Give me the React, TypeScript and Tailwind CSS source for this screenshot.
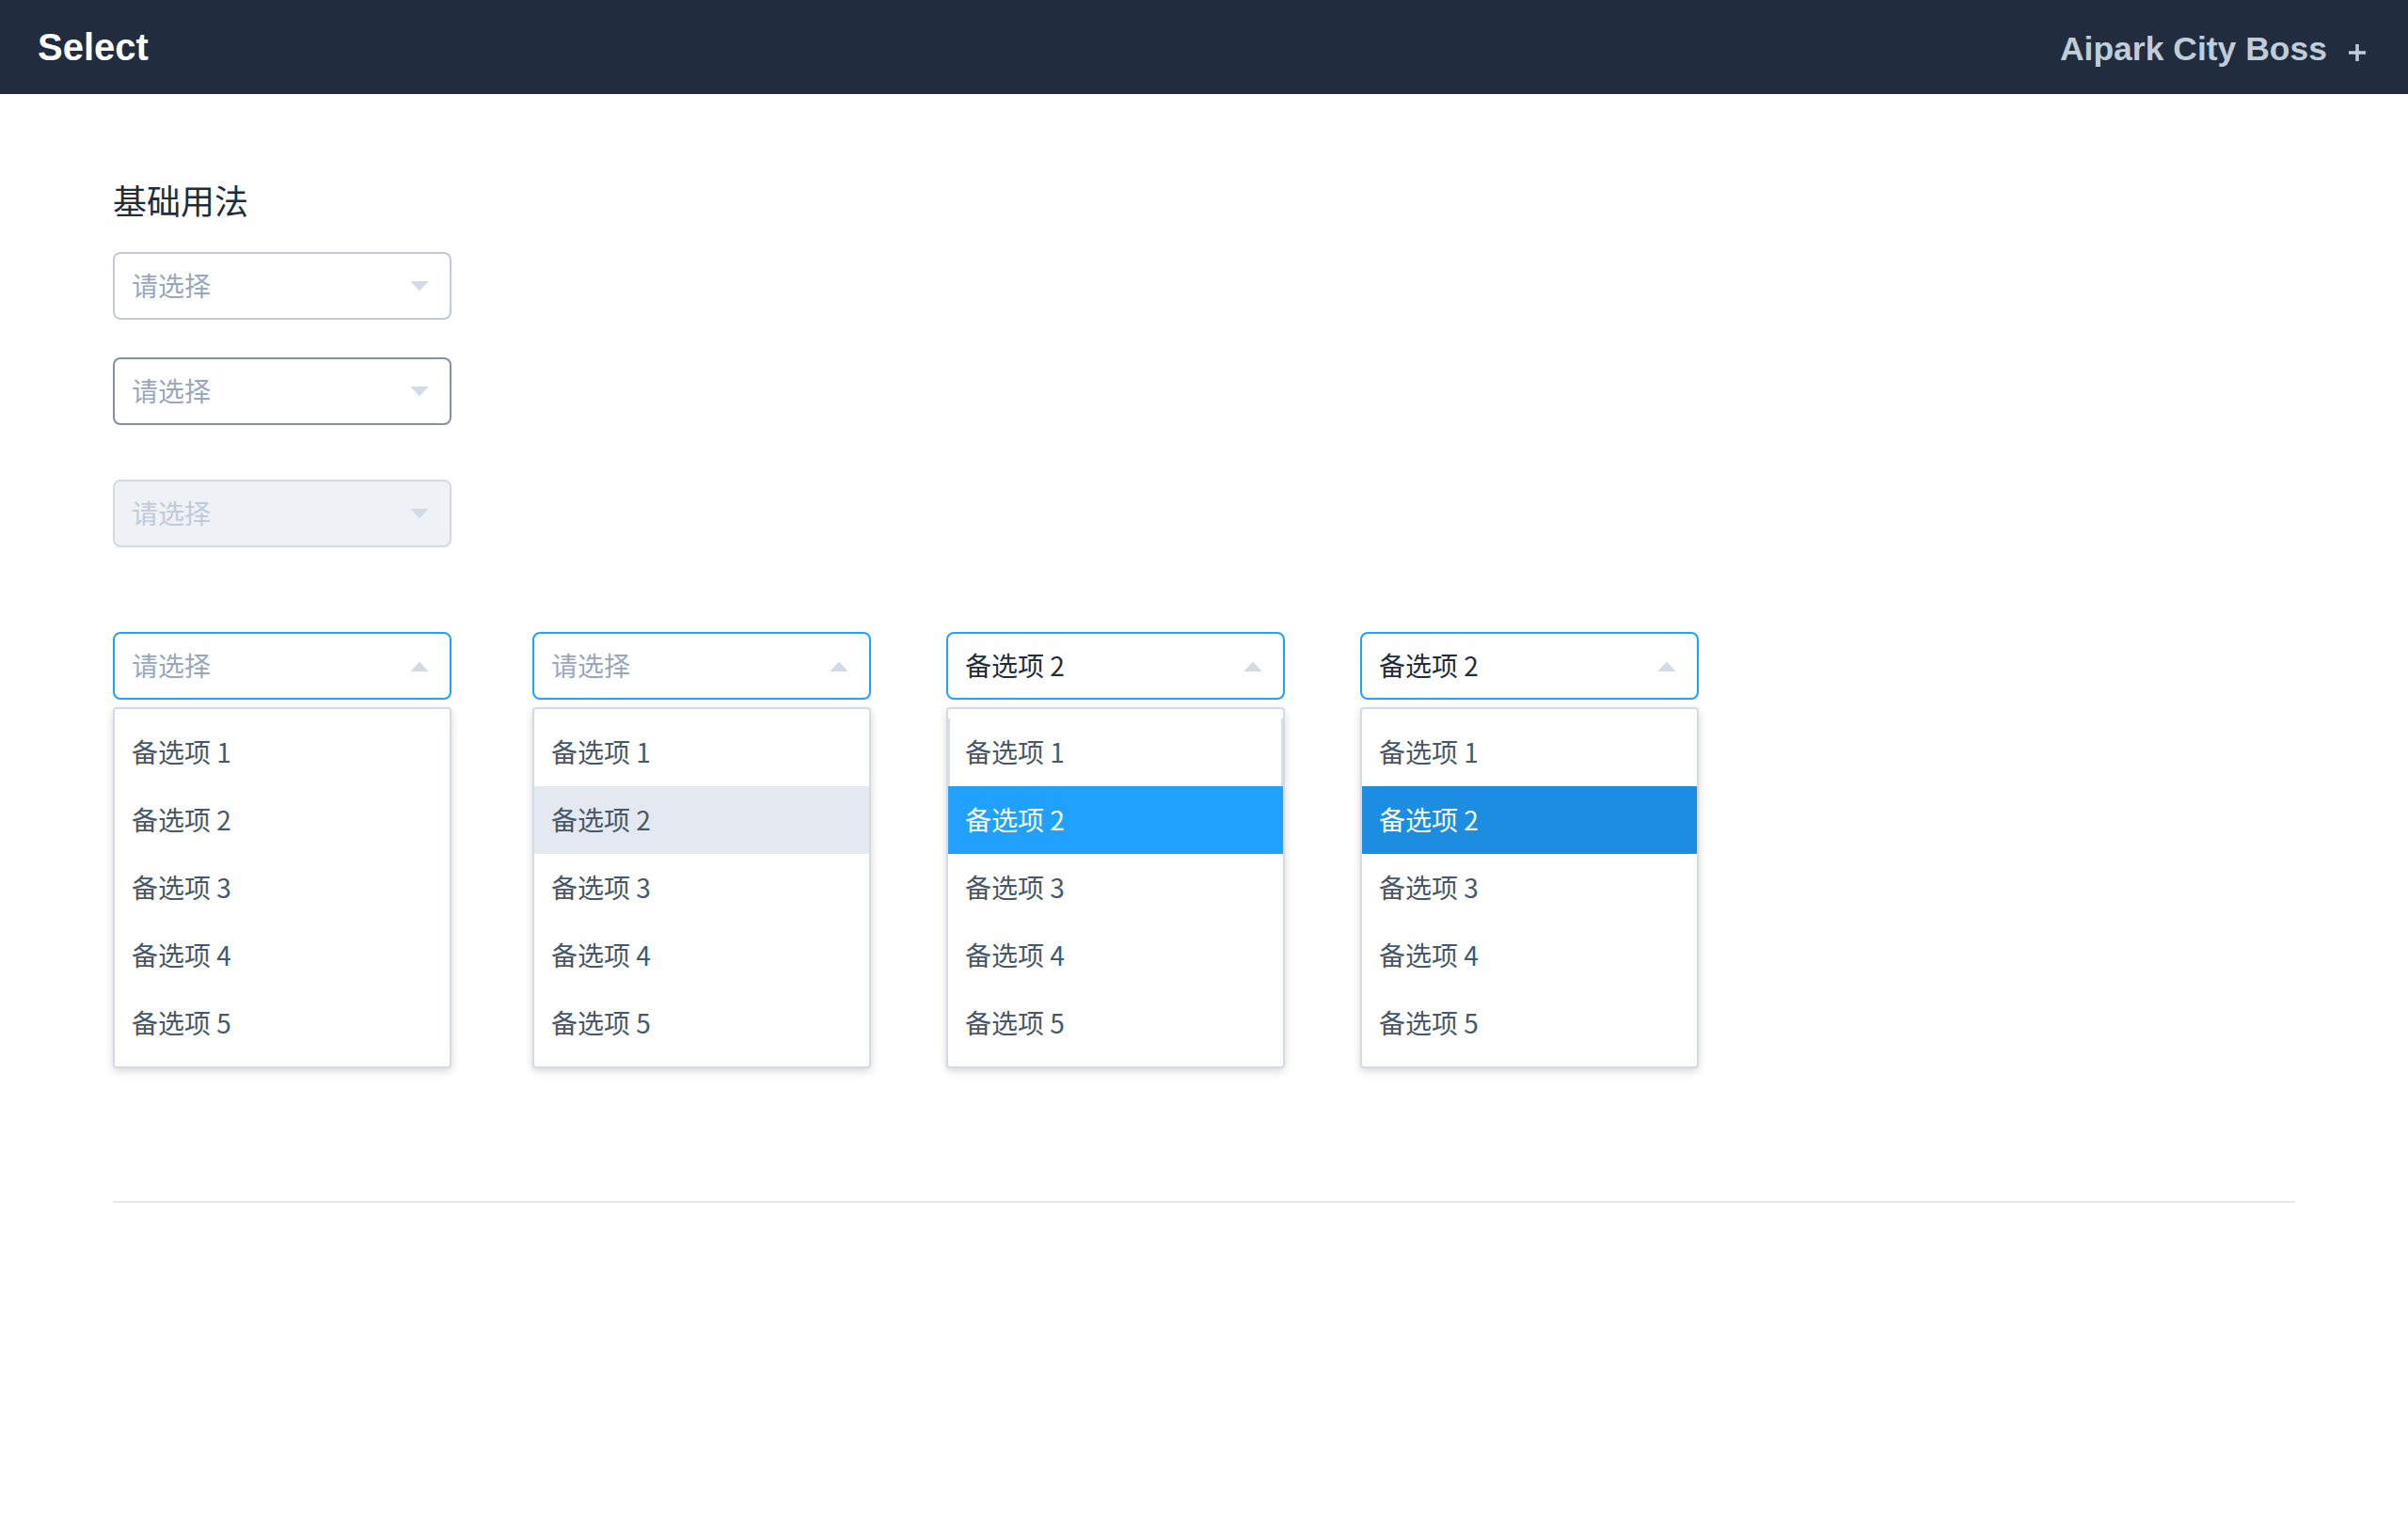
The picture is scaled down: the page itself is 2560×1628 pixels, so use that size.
import React from "react";

type State = "normal" | "hover" | "disabled" | "focus";

function Caret({ up }: { up?: boolean }) {
  return (
    <svg width="20" height="11" viewBox="0 0 20 11" className="shrink-0">
      {up ? (
        <path d="M0.5 11 L10 0.5 L19.5 11 Z" fill="#d1dbe5" />
      ) : (
        <path d="M0.5 0 L19.5 0 L10 10.5 Z" fill="#d1dbe5" />
      )}
    </svg>
  );
}

function SelectBox({
  state,
  value,
  open,
}: {
  state: State;
  value?: string;
  open?: boolean;
}) {
  const box =
    state === "normal"
      ? "border-[#bfcbd9] bg-white"
      : state === "hover"
      ? "border-[#8391a5] bg-white"
      : state === "disabled"
      ? "border-[#d1dbe5] bg-[#eef1f6]"
      : "border-[#20a0ff] bg-white";
  const textColor = value
    ? "text-[#1f2d3d]"
    : state === "disabled"
    ? "text-[#bfcbd9]"
    : "text-[#97a8be]";
  return (
    <div
      className={`flex h-[72px] w-[360px] items-center justify-between rounded-[8px] border-2 pl-[18px] pr-[22px] ${box}`}
    >
      <span className={`pb-[3px] text-[28px] leading-[36px] ${textColor}`}>
        {value ?? "请选择"}
      </span>
      <Caret up={open} />
    </div>
  );
}

type Variant = "none" | "hover" | "selected" | "selectedHover";

function Dropdown({ variant, stripe }: { variant: Variant; stripe?: boolean }) {
  const items = ["备选项 1", "备选项 2", "备选项 3", "备选项 4", "备选项 5"];
  return (
    <div className="mt-[8px] w-[360px] rounded-[4px] border-2 border-[#d1dbe5] bg-white py-[10px] shadow-[0_4px_8px_rgba(0,0,0,0.12),0_0_12px_rgba(0,0,0,0.04)]">
      {items.map((it, i) => {
        let cls = "bg-white text-[#48576a]";
        if (i === 1) {
          if (variant === "hover") cls = "bg-[#e4e8f1] text-[#48576a]";
          else if (variant === "selected") cls = "bg-[#20a0ff] text-white";
          else if (variant === "selectedHover") cls = "bg-[#1c8de0] text-white";
        }
        const extra =
          stripe && i === 0
            ? " shadow-[inset_2px_0_0_#d8dfe7,inset_-2px_0_0_#d8dfe7]"
            : "";
        return (
          <div
            key={it}
            className={`flex h-[72px] items-center pb-[3px] pl-[18px] text-[28px] leading-[36px] ${cls}${extra}`}
          >
            {it}
          </div>
        );
      })}
    </div>
  );
}

export default function App() {
  return (
    <div className="min-h-[1628px] w-full bg-white font-['Noto_Sans_CJK_SC','Noto_Sans',sans-serif]">
      <header className="flex h-[100px] items-center justify-between bg-[#212d3e] pl-[40px] pr-[45px] font-['Liberation_Sans',Arial,sans-serif]">
        <span className="text-[40px] font-bold leading-[40px] text-white">
          Select
        </span>
        <div className="flex items-center">
          <span className="mt-[3px] text-[35.5px] font-bold leading-[36px] text-[#c0ccda]">
            Aipark City Boss
          </span>
          <svg
            width="18"
            height="18"
            viewBox="0 0 18 18"
            className="ml-[23px] translate-y-[6px]"
          >
            <path d="M9 0 V18 M0 9 H18" stroke="#c0ccda" strokeWidth="3.5" />
          </svg>
        </div>
      </header>

      <main className="px-[120px]">
        <h2 className="mt-[94px] text-[36px] font-normal leading-[36px] text-[#1f2d3d]">
          基础用法
        </h2>

        <div className="mt-[38px]">
          <SelectBox state="normal" />
        </div>
        <div className="mt-[40px]">
          <SelectBox state="hover" />
        </div>
        <div className="mt-[58px]">
          <SelectBox state="disabled" />
        </div>

        <div className="mt-[90px] flex items-start">
          <div className="flex flex-col">
            <SelectBox state="focus" open />
            <Dropdown variant="none" />
          </div>
          <div className="ml-[86px] flex flex-col">
            <SelectBox state="focus" open />
            <Dropdown variant="hover" />
          </div>
          <div className="ml-[80px] flex flex-col">
            <SelectBox state="focus" open value="备选项 2" />
            <Dropdown variant="selected" stripe />
          </div>
          <div className="ml-[80px] flex flex-col">
            <SelectBox state="focus" open value="备选项 2" />
            <Dropdown variant="selectedHover" />
          </div>
        </div>

        <div className="mt-[141px] h-[2px] w-full bg-[#e5e9f2]" />
      </main>
    </div>
  );
}
